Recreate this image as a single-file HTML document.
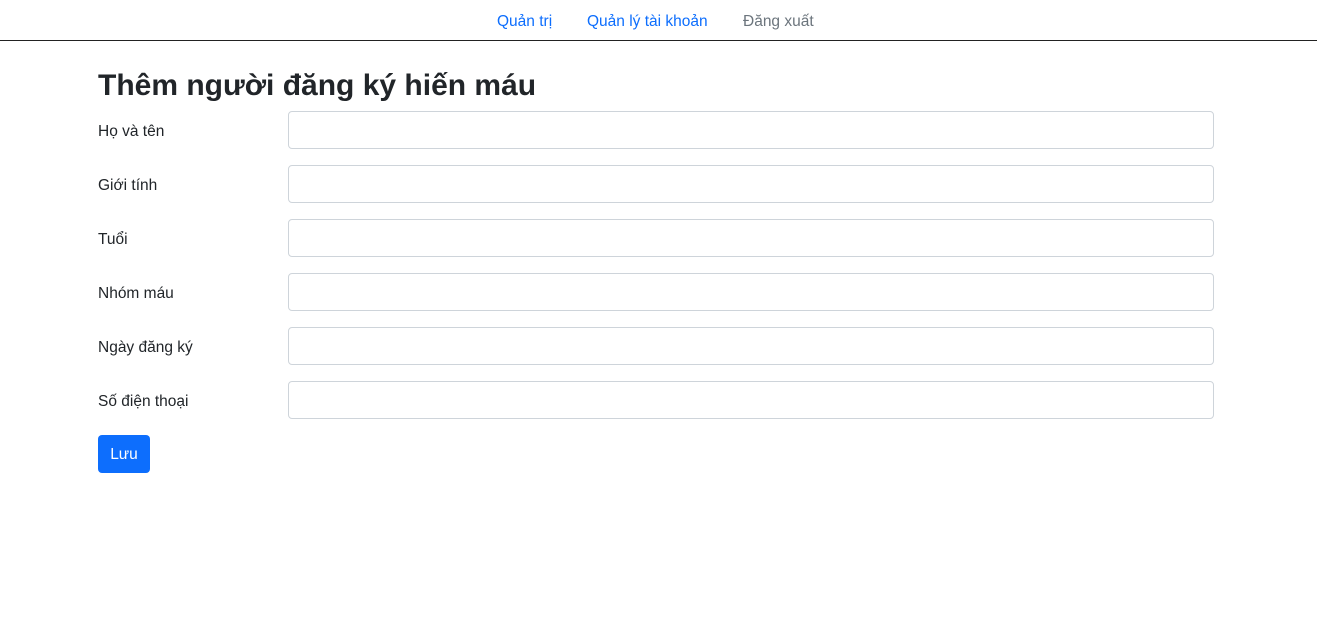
<!DOCTYPE html>
<html><head><meta charset="utf-8"><style>
*{box-sizing:border-box}
body{margin:0;font-family:"Liberation Sans","DejaVu Sans",sans-serif;color:#212529;background:#fff;width:1317px;height:623px;overflow:hidden}
.nav{height:41px;border-bottom:1px solid #222;position:relative}
.nav a{position:absolute;top:13px;font-size:15.5px;text-decoration:none;color:#0d6efd}
h1{position:absolute;left:98px;top:69px;margin:0;font-size:30px;font-weight:bold;letter-spacing:0px}
.row{position:absolute;left:98px;width:1116px;height:38px}
.row label{position:absolute;left:0;top:12px;font-size:15.5px}
.row .in{position:absolute;left:190px;right:0;top:0;height:38px;border:1px solid #ced4da;border-radius:4px}
.btn{position:absolute;left:98px;top:435px;width:52px;height:38px;background:#0d6efd;color:#fff;border-radius:4px;font-size:15.5px;text-align:center;line-height:40px}
</style></head><body>
<div class="nav">
<a style="left:497px">Quản trị</a>
<a style="left:587px">Quản lý tài khoản</a>
<a style="left:743px;color:#6c757d">Đăng xuất</a>
</div>
<h1>Thêm người đăng ký hiến máu</h1>
<div class="row" style="top:111px"><label>Họ và tên</label><div class="in"></div></div>
<div class="row" style="top:165px"><label>Giới tính</label><div class="in"></div></div>
<div class="row" style="top:219px"><label>Tuổi</label><div class="in"></div></div>
<div class="row" style="top:273px"><label>Nhóm máu</label><div class="in"></div></div>
<div class="row" style="top:327px"><label>Ngày đăng ký</label><div class="in"></div></div>
<div class="row" style="top:381px"><label>Số điện thoại</label><div class="in"></div></div>
<div class="btn">Lưu</div>
</body></html>
